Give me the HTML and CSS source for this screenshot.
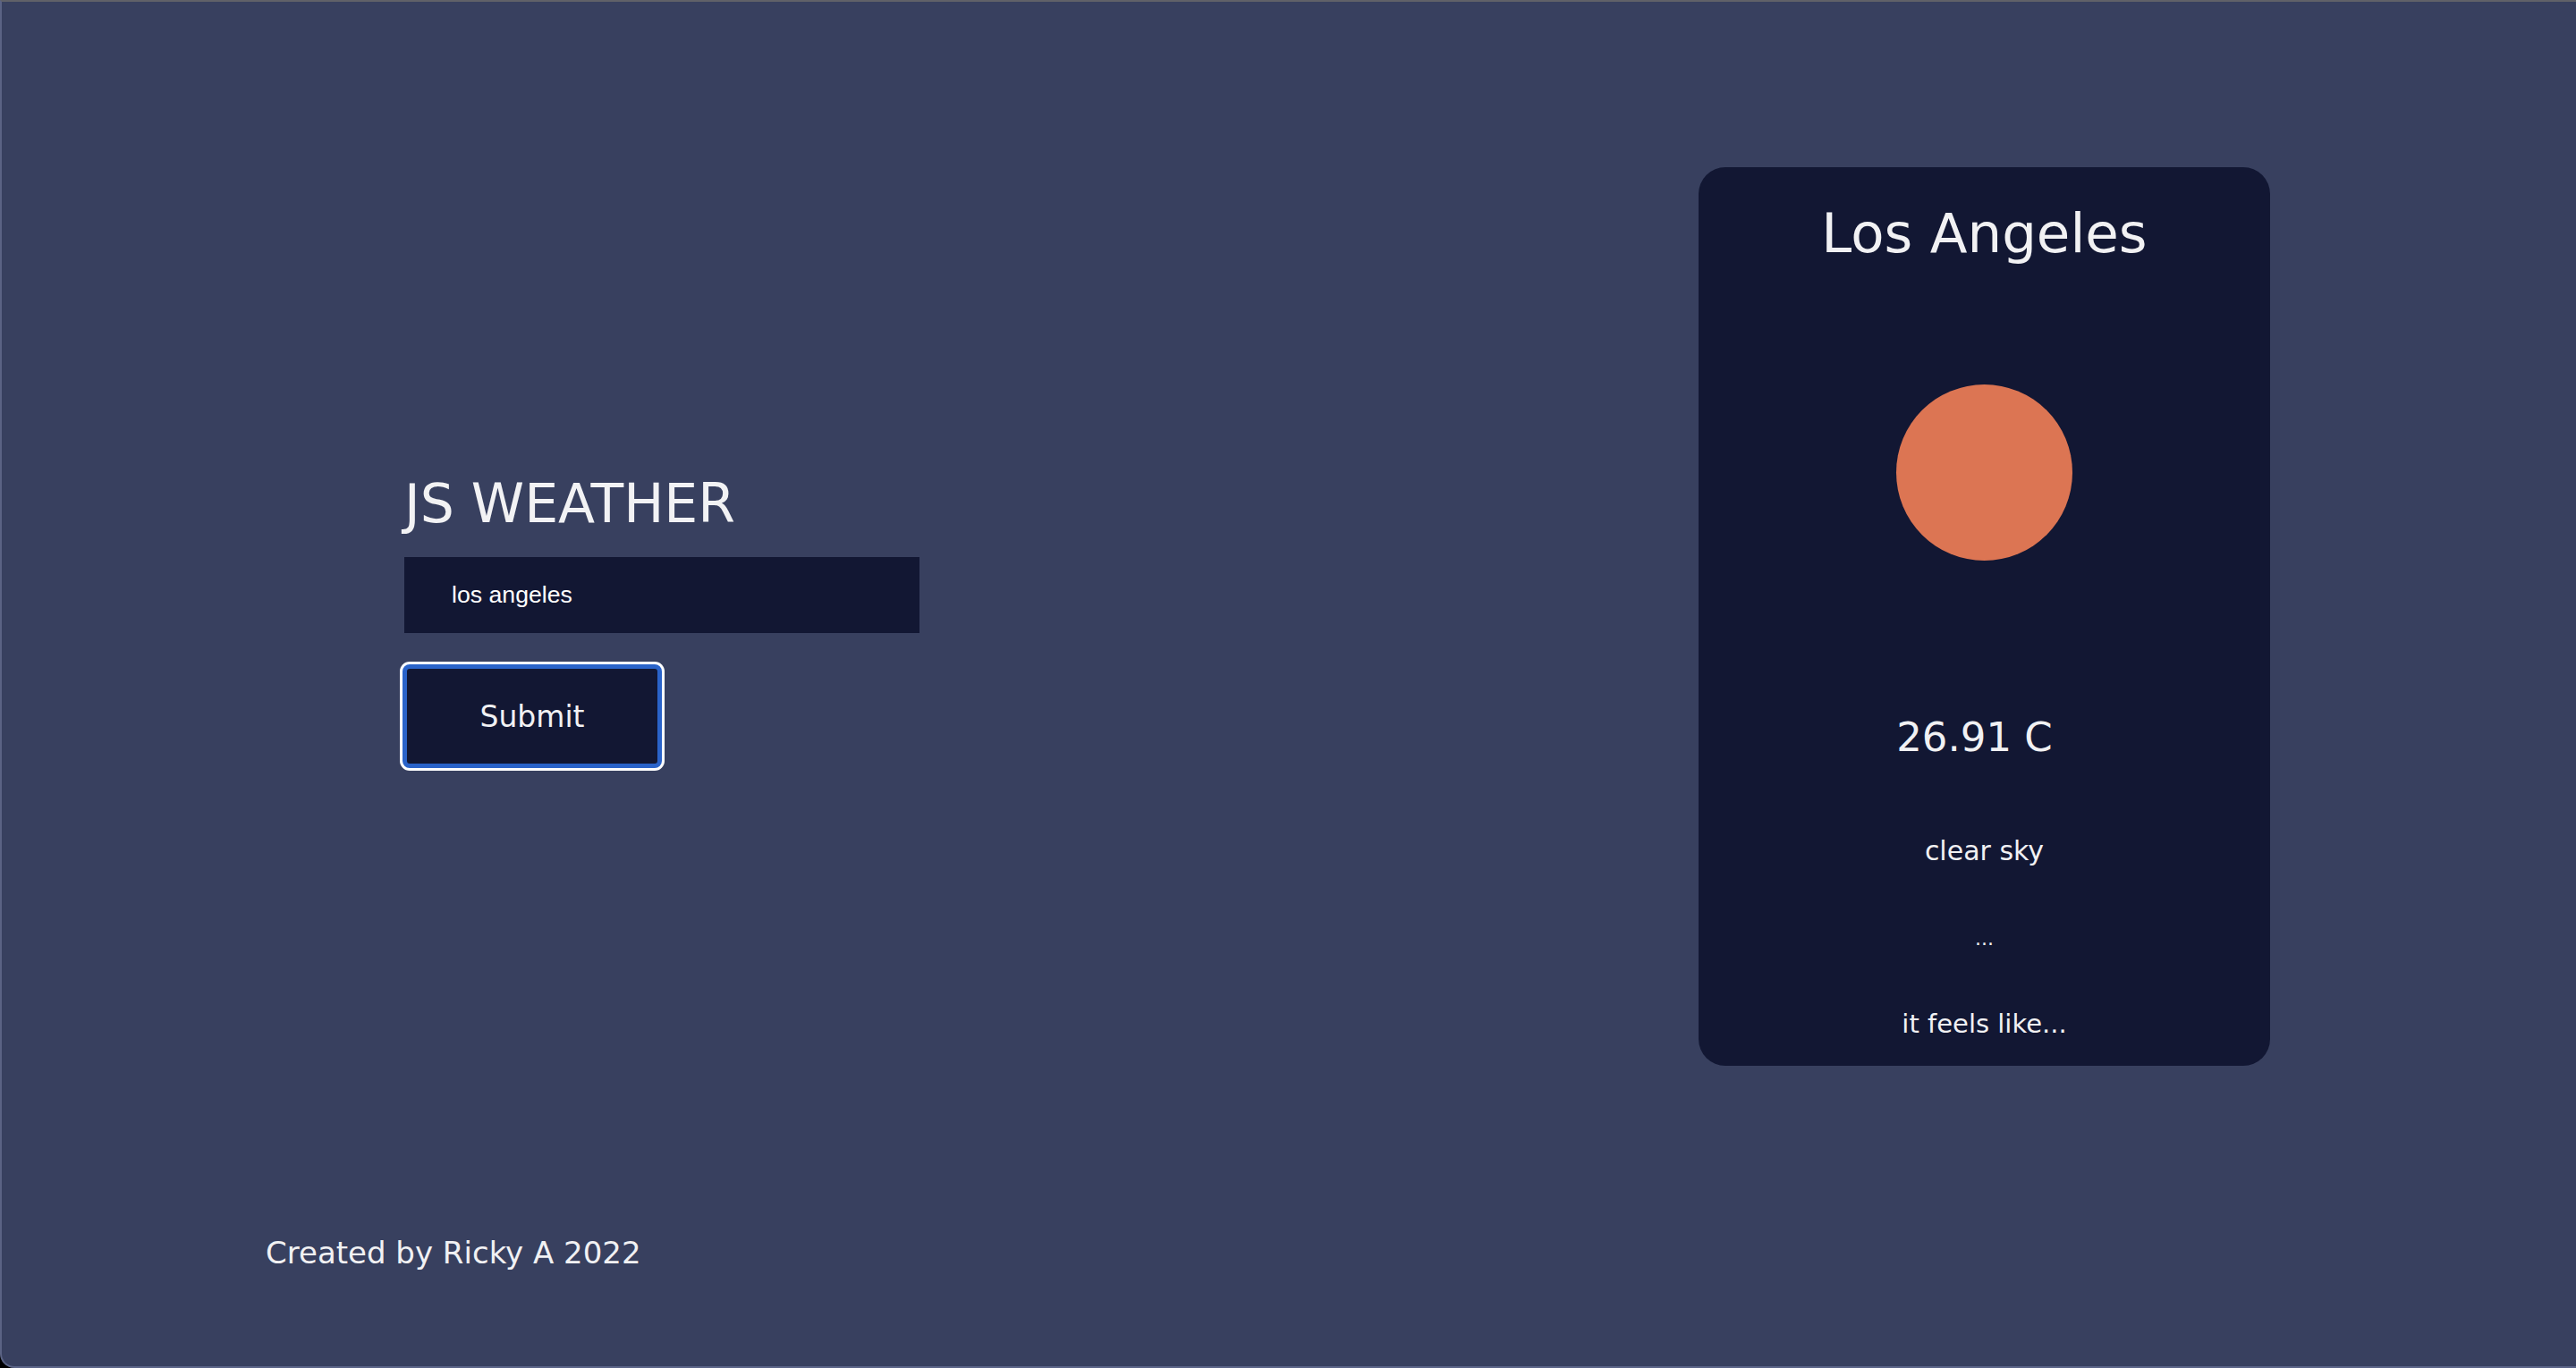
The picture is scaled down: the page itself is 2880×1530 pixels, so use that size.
FILE: index.html
```html
<!DOCTYPE html>
<html lang="en">
<head>
<meta charset="utf-8">
<title>JS Weather</title>
<link rel="stylesheet" href="styles.css">
</head>
<body>
<div class="window">
  <main class="main">
    <section class="search">
      <h1 class="title">JS WEATHER</h1>
      <input class="city-input" type="text" value="los angeles">
      <button class="submit" type="button">Submit</button>
    </section>
    <section class="card">
      <h2 class="city">Los Angeles</h2>
      <div class="sun"></div>
      <p class="temp">26.91 C</p>
      <p class="desc">clear sky</p>
      <p class="dots">...</p>
      <p class="feels">it feels like...</p>
    </section>
  </main>
  <footer class="footer">Created by Ricky A 2022</footer>
</div>
</body>
</html>
```

FILE: styles.css
```css
html {
  background: #000;
}
body {
  margin: 0;
  font-family: "DejaVu Sans", sans-serif;
  color: #f1f1f3;
}
.window {
  box-sizing: border-box;
  height: 1530px;
  background: #38405f;
  border-top: 2px solid #606168;
  border-left: 2px solid #5b6384;
  border-bottom: 2px solid #5c6588;
  border-bottom-left-radius: 16px;
  overflow: hidden;
}
.main {
  display: flex;
  align-items: flex-start;
  padding-top: 185px;
}
.search {
  flex: 0 0 auto;
  width: 1447px;
  margin-left: 450px;
  margin-top: 346px;
  display: flex;
  flex-direction: column;
  align-items: flex-start;
}
.title {
  margin: 0;
  font-size: 60px;
  font-weight: normal;
  line-height: 60px;
  color: #f2f2f4;
}
.city-input {
  box-sizing: border-box;
  margin: 30px 0 0 0;
  width: 576px;
  height: 85px;
  border: none;
  outline: none;
  background: #121733;
  color: #ffffff;
  font-family: "Liberation Sans", Arial, sans-serif;
  font-size: 26.67px;
  padding: 0 0 0 53px;
}
.submit {
  box-sizing: border-box;
  margin: 35px 0 0 -2px;
  width: 290px;
  height: 116px;
  background: #121733;
  border: 5px solid #2a63c9;
  border-radius: 8px;
  box-shadow: 0 0 0 3px #ffffff;
  color: #f1f1f3;
  font-family: "DejaVu Sans", sans-serif;
  font-size: 33px;
  line-height: 1;
  padding: 0;
}
.card {
  box-sizing: border-box;
  flex: 0 0 auto;
  width: 639px;
  height: 1005px;
  background: #121733;
  border-radius: 30px;
  padding-top: 43px;
  display: flex;
  flex-direction: column;
  align-items: center;
}
.city {
  margin: 0;
  font-weight: normal;
  font-size: 61px;
  line-height: 61px;
}
.sun {
  margin: 139px 0 0 0;
  width: 197px;
  height: 197px;
  border-radius: 50%;
  background: #dc7553;
}
.temp {
  margin: 175px 0 0 0;
  font-size: 45px;
  line-height: 45px;
  padding-right: 22px;
}
.desc {
  margin: 90px 0 0 0;
  font-size: 30px;
  line-height: 30px;
}
.dots {
  margin: 68px 0 0 0;
  font-size: 22px;
  line-height: 30px;
}
.feels {
  margin: 66px 0 0 0;
  font-size: 29px;
  line-height: 29px;
}
.footer {
  margin-top: 192px;
  padding-left: 295px;
  font-size: 34px;
  line-height: 34px;
  color: #f1f1f3;
}
```
